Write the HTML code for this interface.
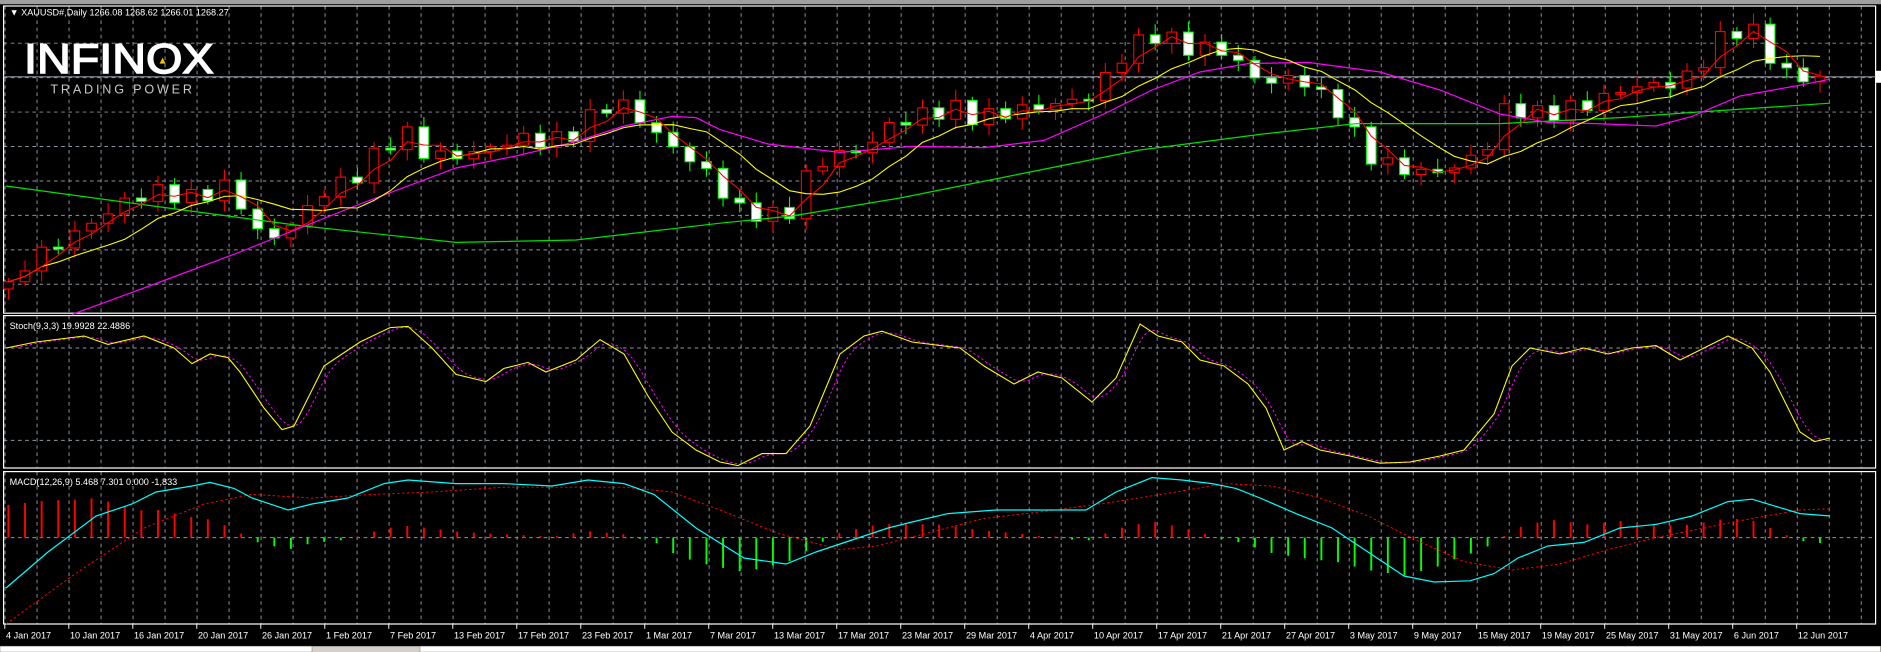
<!DOCTYPE html>
<html><head><meta charset="utf-8"><style>
html,body{margin:0;padding:0;background:#000;overflow:hidden}
svg{display:block}
text{font-family:"Liberation Sans",sans-serif}
</style></head><body>
<svg id="s" xmlns="http://www.w3.org/2000/svg" width="1881" height="652" viewBox="0 0 1567.5 543.333">
<rect x="0" y="0" width="1567.5" height="543.333" fill="#000"/>
<rect x="0" y="0" width="1567.5" height="3.5" fill="#a0a0a0"/>
<g id="grid"></g>
<rect x="3" y="5" width="1560" height="256" fill="none" stroke="#fff" stroke-width="1"/>
<rect x="3" y="263" width="1560" height="127" fill="none" stroke="#fff" stroke-width="1"/>
<rect x="3" y="393" width="1560" height="127" fill="none" stroke="#fff" stroke-width="1"/>
<line x1="3" y1="64" x2="1563" y2="64" stroke="#8c96a0" stroke-width="1"/>
<rect x="1563" y="59" width="4.5" height="10" fill="#fff"/>
<g id="plot"></g>
<text x="8" y="13" font-size="7.6" fill="#fff">▼ XAUUSD#,Daily  1266.08 1268.62 1266.01 1268.27</text>
<text x="8" y="274" font-size="7.6" fill="#fff">Stoch(9,3,3) 19.9928 22.4886</text>
<text x="8" y="404" font-size="7.6" fill="#fff">MACD(12,26,9) 5.468 7.301 0.000 -1,833</text>
<text x="20" y="61" font-size="35" fill="#fff" stroke="#fff" stroke-width="1.2" textLength="158" lengthAdjust="spacingAndGlyphs">INFINOX</text>
<polygon points="133,53 138,53 135.5,48" fill="#f0c000"/>
<text x="42" y="78" font-size="10.5" fill="#c8c8c8" textLength="118" lengthAdjust="spacing">TRADING POWER</text>
<g id="dates" font-size="7.6" fill="#fff"></g>
<rect x="0" y="538.5" width="1567.5" height="4.9" fill="#d4d0c8"/>
<rect x="0" y="538.5" width="260" height="4.9" fill="#fff" stroke="#888" stroke-width="0.5"/>
<rect x="350" y="538.5" width="1217" height="4.9" fill="#fff" stroke="#888" stroke-width="0.5"/>
</svg>
<script>
(function(){
var NS="http://www.w3.org/2000/svg";
function el(p,t,a){var e=document.createElementNS(NS,t);for(var k in a)e.setAttribute(k,a[k]);p.appendChild(e);return e;}
var grid=document.getElementById('grid'),plot=document.getElementById('plot');
var gs={stroke:"#8c96a0","stroke-width":0.8,"stroke-dasharray":"3,3"};
for(var x=4.2;x<1563;x+=26.67){
 el(grid,'line',Object.assign({x1:x,y1:5,x2:x,y2:261},gs));
 el(grid,'line',Object.assign({x1:x,y1:263,x2:x,y2:390},gs));
 el(grid,'line',Object.assign({x1:x,y1:393,x2:x,y2:520},gs));
}
for(var y=36;y<260;y+=28.7) el(grid,'line',Object.assign({x1:3,y1:y,x2:1563,y2:y},gs));
[290,367].forEach(function(y){el(grid,'line',Object.assign({x1:3,y1:y,x2:1563,y2:y},gs));});
el(grid,'line',Object.assign({x1:3,y1:448,x2:1563,y2:448},gs));
function interp(pts,x){if(x<=pts[0][0])return pts[0][1];for(var i=1;i<pts.length;i++){if(x<=pts[i][0]){var a=pts[i-1],b=pts[i];return a[1]+(b[1]-a[1])*(x-a[0])/(b[0]-a[0]);}}return pts[pts.length-1][1];}
function pl(pts,c,w,d){var a={points:pts.map(function(p){return p[0]+','+p[1]}).join(' '),fill:'none',stroke:c,'stroke-width':w||1};if(d)a['stroke-dasharray']=d;el(plot,'polyline',a);}
var price=[[5,245],[20,220],[45,205],[70,190],[100,170],[125,160],[135,160],[160,165],[190,155],[205,175],[218,200],[235,195],[250,180],[270,160],[300,145],[320,120],[345,110],[355,130],[380,130],[405,125],[430,115],[460,118],[480,110],[500,90],[515,85],[535,100],[550,115],[565,125],[590,145],[615,175],[645,180],[660,175],[670,150],[690,130],[720,125],[740,105],[770,95],[800,90],[815,100],[830,95],[860,90],[890,85],[910,80],[925,60],[940,40],[965,28],[990,40],[1010,40],[1025,45],[1045,65],[1065,68],[1085,65],[1100,80],[1120,95],[1135,125],[1150,135],[1165,140],[1190,145],[1210,140],[1230,130],[1245,115],[1258,80],[1270,95],[1290,95],[1310,90],[1330,85],[1350,75],[1380,70],[1400,70],[1420,50],[1440,25],[1460,25],[1470,40],[1485,60],[1500,65],[1520,65]];
var bw=13.85,xs=[],cl=[];
for(var x=7;x<=1525;x+=bw){xs.push(x);cl.push(interp(price,x)+Math.sin(x*0.7)*7);}
for(var i=0;i<xs.length;i++){
 var o=i?cl[i-1]:cl[0]+6,c=cl[i],bt=Math.min(o,c),bb=Math.max(o,c),up=c<o;
 var hh=Math.max(bb-bt,1.5),wt=bt-3-Math.abs(Math.sin(i*1.3))*6,wb=bb+3+Math.abs(Math.cos(i*1.7))*6;
 el(plot,'line',{x1:xs[i],y1:wt,x2:xs[i],y2:wb,stroke:up?'#f00':'#0f0','stroke-width':0.9});
 el(plot,'rect',{x:xs[i]-4,y:bt,width:8,height:hh,fill:up?'#000':'#fff',stroke:up?'#f00':'#0f0','stroke-width':0.9});
}
function sma(n){var r=[];for(var i=0;i<cl.length;i++){var s=0,k=0;for(var j=Math.max(0,i-n+1);j<=i;j++){s+=cl[j];k++;}r.push([xs[i],s/k]);}return r;}
pl([[5,155],[130,172],[250,188],[380,202],[480,200],[600,186],[660,180],[750,165],[850,145],[950,125],[1050,112],[1130,103],[1250,103],[1350,98],[1420,93],[1525,86]],'#00e000',1);
pl([[60,262],[120,240],[200,210],[300,170],[380,140],[430,130],[480,118],[520,105],[560,97],[580,98],[600,108],[640,120],[700,127],[760,122],[820,123],[870,117],[920,95],[960,75],[1000,60],[1040,53],[1090,52],[1150,60],[1200,75],[1250,95],[1290,102],[1330,103],[1380,105],[1410,97],[1450,80],[1500,71],[1525,66]],'#f0f',1);
pl(sma(8),'#ff0',0.9);
pl(sma(3),'#f00',0.9);
var st=[[5,290],[30,285],[70,280],[90,287],[120,280],[145,290],[160,303],[175,295],[190,298],[200,310],[220,340],[235,358],[245,355],[270,305],[300,285],[325,273],[340,272],[360,290],[380,312],[405,318],[420,307],[440,302],[455,310],[480,300],[500,283],[520,295],[540,330],[560,360],[580,375],[600,385],[615,388],[635,378],[655,378],[675,355],[700,295],[720,280],[735,276],[760,285],[800,290],[820,305],[845,320],[865,310],[885,315],[910,335],[930,315],[950,270],[965,280],[985,285],[1000,300],[1020,305],[1040,320],[1055,340],[1070,375],[1085,368],[1100,375],[1125,380],[1150,386],[1175,385],[1200,380],[1220,375],[1245,345],[1260,305],[1275,290],[1300,295],[1320,290],[1340,295],[1360,290],[1380,288],[1400,300],[1420,290],[1440,280],[1460,290],[1475,310],[1490,340],[1500,360],[1512,368],[1525,365]];
var sm=[];for(var x=5;x<=1525;x+=6){var v=0;for(var d=0;d<3;d++)v+=interp(st,x-d*6);sm.push([x,v/3]);}
pl(sm,'#f0f',0.8,'2,2');pl(st,'#ff0',0.9);
var cy=[[5,490],[40,460],[80,430],[110,420],[130,410],[160,405],[175,402],[195,407],[210,415],[240,425],[260,420],[290,415],[320,403],[340,400],[380,403],[420,403],[460,405],[490,400],[520,403],[545,412],[580,440],[620,465],[655,470],[680,460],[710,450],[740,440],[760,435],[790,428],[830,425],[870,425],[905,425],[930,410],[960,398],[985,400],[1010,403],[1030,407],[1050,415],[1080,428],[1110,440],[1140,460],[1170,480],[1195,485],[1225,484],[1245,478],[1265,465],[1290,455],[1320,452],[1350,440],[1380,437],[1410,430],[1440,418],[1460,416],[1480,422],[1500,428],[1525,430]];
var sg=[[5,520],[60,480],[120,440],[170,420],[210,412],[260,415],[310,412],[360,410],[420,406],[520,406],[560,410],[600,425],[650,445],[700,458],[730,455],[770,445],[820,432],[880,425],[930,418],[980,410],[1020,403],[1060,405],[1100,415],[1140,430],[1180,450],[1220,468],[1260,475],[1300,470],[1340,458],[1380,448],[1420,440],[1460,432],[1500,425],[1525,424]];
for(var i=0;i<xs.length;i++){var x=xs[i],dd=interp(sg,x)-interp(cy,x);var h=dd*0.9;
 if(Math.abs(h)<1)h=h<0?-1:1;
 el(plot,'line',{x1:x,y1:448,x2:x,y2:448-h,stroke:h>0?'#f00':'#0f0','stroke-width':1.6});}
pl(sg,'#f00',0.8,'2,2');pl(cy,'#0ff',1);
var labels=["4 Jan 2017","10 Jan 2017","16 Jan 2017","20 Jan 2017","26 Jan 2017","1 Feb 2017","7 Feb 2017","13 Feb 2017","17 Feb 2017","23 Feb 2017","1 Mar 2017","7 Mar 2017","13 Mar 2017","17 Mar 2017","23 Mar 2017","29 Mar 2017","4 Apr 2017","10 Apr 2017","17 Apr 2017","21 Apr 2017","27 Apr 2017","3 May 2017","9 May 2017","15 May 2017","19 May 2017","25 May 2017","31 May 2017","6 Jun 2017","12 Jun 2017"];
var dg=document.getElementById('dates');
labels.forEach(function(t,i){var x=4+i*53.33;el(dg,'line',{x1:x,y1:520,x2:x,y2:524,stroke:'#fff','stroke-width':0.8});var e=el(dg,'text',{x:x+1,y:532});e.textContent=t;});
})();
</script>
</body></html>
